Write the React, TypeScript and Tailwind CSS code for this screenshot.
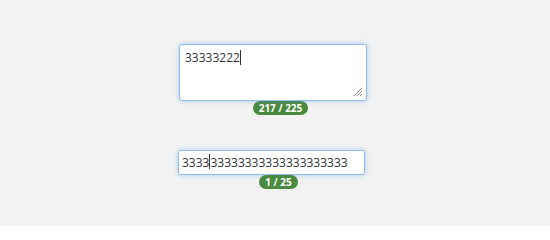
import React from "react";

function Caret() {
  return <span className="inline-block w-px h-[15px] bg-[#333] align-middle -mt-[2px]" />;
}

export default function App() {
  return (
    <div
      className="w-[550px] h-[226px] bg-[#f2f2f2] flex flex-col items-start pt-[44px] pl-[179px]"
      style={{ fontFamily: '"Open Sans", sans-serif' }}
    >
      <div className="relative w-[188px] h-[57px] bg-white border border-[#93bceb] rounded-[3px] shadow-[0_0_5px_rgba(80,150,230,0.45)] px-[5px] pt-[4px] text-[12px] text-[#333] leading-[18px]">
        <span>33333222</span>
        <Caret />
        <svg className="absolute right-[3px] bottom-[3px]" width="10" height="10" viewBox="0 0 10 10">
          <path d="M9 1 L1 9 M9 4 L4 9 M9 7 L7 9" stroke="#8a8a8a" strokeWidth="1" />
        </svg>
      </div>
      <div className="ml-[74px] h-[14px] w-[55px] rounded-full bg-[#4a8a3f] text-white text-[10px] font-bold leading-[14px] text-center">
        217 / 225
      </div>
      <div className="-ml-[1px] mt-[35px] w-[187px] h-[25px] bg-white border border-[#93bceb] rounded-[3px] shadow-[0_0_5px_rgba(80,150,230,0.45)] px-[3px] flex items-center text-[12px] text-[#333]">
        <span>3333</span>
        <Caret />
        <span>33333333333333333333</span>
      </div>
      <div className="ml-[80px] h-[14px] w-[39px] rounded-full bg-[#4a8a3f] text-white text-[10px] font-bold leading-[14px] text-center">
        1 / 25
      </div>
    </div>
  );
}
